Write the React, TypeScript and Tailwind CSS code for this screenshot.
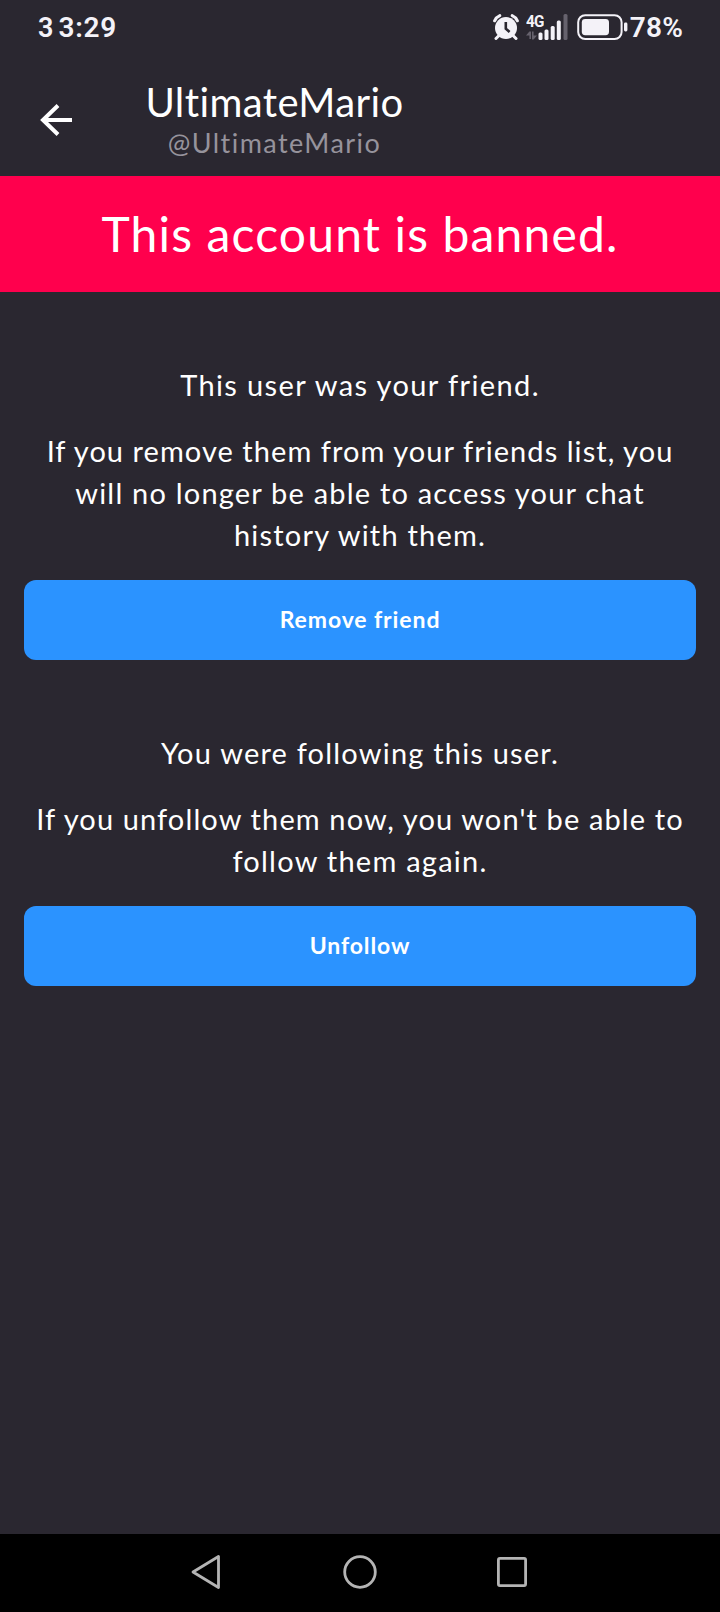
import clsx from "clsx";

type Line = {
  text: string;
  tracking: string;
};

type NoticeProps = {
  heading: Line;
  lines: Line[];
  action: string;
};

function StatusBar() {
  return (
    <div className="flex h-14 items-start justify-between pr-[37px] pl-[38px] text-[#f4f2f8]">
      <div className="flex items-baseline pt-3 font-['Roboto',sans-serif] leading-8 font-semibold">
        <span className="mr-[5px] text-[27px]">3</span>
        <span className="text-[28px] tracking-[0.7px]">3:29</span>
      </div>

      <div className="flex items-start">
        <svg className="mt-[14px] h-[26px] w-[26px]" viewBox="0 0 26 26" fill="none">
          <circle cx="13" cy="14" r="11" fill="currentColor" />
          <path
            d="M1.6 6.8C2.6 4.4 4.4 2.6 6.8 1.6M24.4 6.8c-1-2.4-2.8-4.2-5.2-5.2M6 21.5l-3 3M20 21.5l3 3"
            stroke="currentColor"
            strokeWidth="3"
            strokeLinecap="round"
          />
          <path d="M12.8 8v6.6l3.8 3.4" stroke="#2a2730" strokeWidth="2.6" />
        </svg>

        <div className="relative ml-[7px] h-10 w-[43px]">
          <span className="absolute top-[14px] left-0 origin-left scale-x-90 font-['Roboto',sans-serif] text-[17px] leading-[14px] font-bold tracking-[-1px]">
            4G
          </span>
          <svg className="h-10 w-[43px]" viewBox="0 0 43 40" fill="currentColor">
            <path d="M0 35.5l3.4-4H5V39H3.4v-3.5zM11 35.5l-3.4 4H6V31.500h1.600v4z" fill="#66626d" />
            <rect x="12.5" y="32.5" width="4" height="7.5" rx="1.5" />
            <rect x="18.5" y="29.5" width="4" height="10.5" rx="1.5" />
            <rect x="24.7" y="26" width="4" height="14" rx="1.5" />
            <rect x="30.8" y="20.5" width="4" height="19.5" rx="1.5" />
            <rect x="37.5" y="14" width="4" height="26" rx="1.5" fill="#66626d" />
          </svg>
        </div>

        <svg className="mt-[14px] ml-2 h-[26px] w-[52px]" viewBox="0 0 52 26" fill="none">
          <rect x="1.2" y="1.2" width="43.4" height="23.8" rx="7" stroke="currentColor" strokeWidth="2" />
          <rect x="4.8" y="5" width="27.2" height="16.2" rx="3.4" fill="currentColor" />
          <rect x="47" y="8.5" width="3.4" height="9" rx="1.4" fill="currentColor" />
        </svg>

        <span className="pt-3 pl-px font-['Roboto',sans-serif] text-[28px] leading-8 font-semibold tracking-[0.2px]">
          78%
        </span>
      </div>
    </div>
  );
}

function Header() {
  return (
    <header className="flex h-[120px] text-white">
      <button type="button" aria-label="Back" className="mt-12 ml-10 h-8 w-8">
        <svg viewBox="0 0 32 32" fill="none" stroke="currentColor" strokeWidth="4">
          <path d="M32 16H3M18 1.5L3 16l15 14.5" />
        </svg>
      </button>
      <div className="ml-[75px] w-[255px] whitespace-nowrap">
        <h1 className="mt-[22px] flex justify-center text-[40px] leading-[48px] tracking-[0.4px]">
          UltimateMario
        </h1>
        <p className="mt-px flex justify-center text-[27px] leading-8 tracking-[1.45px] text-[#96939c]">
          @UltimateMario
        </p>
      </div>
    </header>
  );
}

function Notice({ heading, lines, action }: NoticeProps) {
  return (
    <section className="mt-[72px] px-6 text-[29px] leading-[42px] whitespace-nowrap text-white">
      <h2 className={clsx("flex justify-center", heading.tracking)}>{heading.text}</h2>
      <p className="mt-6">
        {lines.map((line) => (
          <span key={line.text} className={clsx("flex justify-center", line.tracking)}>
            {line.text}
          </span>
        ))}
      </p>
      <button
        type="button"
        className="mt-6 flex h-20 w-full items-center justify-center rounded-xl bg-[#2b93ff] pb-0.5 text-[23px] font-bold tracking-[0.9px]"
      >
        {action}
      </button>
    </section>
  );
}

function NavigationBar() {
  return (
    <nav className="flex h-[78px] items-center bg-black pb-0.5 pl-[190px] text-[#b4b4b4]">
      <svg className="h-9 w-8" viewBox="0 0 32 36" fill="none" stroke="currentColor" strokeWidth="2.8" strokeLinejoin="round">
        <path d="M28.5 2.5v31L3 18z" />
      </svg>
      <svg className="ml-[120px] h-9 w-9" viewBox="0 0 36 36" fill="none" stroke="currentColor" strokeWidth="2.8">
        <circle cx="18" cy="18" r="15.3" />
      </svg>
      <svg className="ml-[116px] h-9 w-9" viewBox="0 0 36 36" fill="none" stroke="currentColor" strokeWidth="2.8">
        <rect x="4.4" y="4.4" width="27.2" height="27.2" rx="1.5" />
      </svg>
    </nav>
  );
}

export default function App() {
  return (
    <main className="flex h-[1612px] w-[720px] flex-col overflow-hidden bg-[#2a2730] font-['Lato',sans-serif]">
      <StatusBar />
      <Header />
      <div className="flex h-[116px] items-center justify-center bg-[#ff004d] pb-px text-[48px] tracking-[1.15px] whitespace-nowrap text-white">
        This account is banned.
      </div>

      <Notice
        heading={{ text: "This user was your friend.", tracking: "tracking-[1.38px]" }}
        lines={[
          { text: "If you remove them from your friends list, you", tracking: "tracking-[1.05px]" },
          { text: "will no longer be able to access your chat", tracking: "tracking-[1.2px]" },
          { text: "history with them.", tracking: "tracking-[1.2px]" },
        ]}
        action="Remove friend"
      />
      <Notice
        heading={{ text: "You were following this user.", tracking: "tracking-[1.2px]" }}
        lines={[
          { text: "If you unfollow them now, you won't be able to", tracking: "tracking-[1.12px]" },
          { text: "follow them again.", tracking: "tracking-[1.25px]" },
        ]}
        action="Unfollow"
      />

      <div className="flex-1" />
      <NavigationBar />
    </main>
  );
}
